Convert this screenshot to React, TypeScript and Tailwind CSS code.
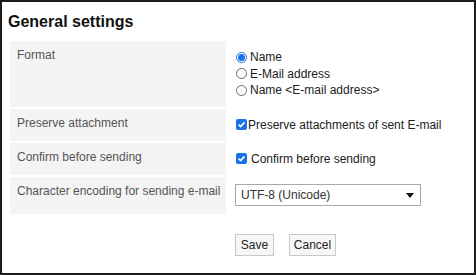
import React from "react";

const Radio = ({ checked }: { checked?: boolean }) =>
  checked ? (
    <span className="flex h-[11px] w-[11px] shrink-0 items-center justify-center rounded-full border border-[#1a73e8] bg-white">
      <span className="h-[7px] w-[7px] rounded-full bg-[#1a73e8]" />
    </span>
  ) : (
    <span className="h-[11px] w-[11px] shrink-0 rounded-full border border-[#6b6b6b] bg-white" />
  );

const Check = () => (
  <span className="flex h-[11px] w-[11px] shrink-0 items-center justify-center rounded-[2px] bg-[#1a73e8]">
    <svg width="9" height="9" viewBox="0 0 10 10">
      <path d="M1.8 5.2 L4 7.4 L8.3 2.6" fill="none" stroke="#fff" strokeWidth="1.8" />
    </svg>
  </span>
);

const Label = ({ children }: { children: React.ReactNode }) => (
  <div className="whitespace-nowrap bg-[#f4f4f4] pl-[7px] pt-[7px] text-[12px] leading-[15px] text-[#555]">{children}</div>
);

export default function App() {
  return (
    <div
      className="h-[275px] w-[476px] border-2 border-[#1c1c1c] bg-white text-[#222]"
      style={{ fontFamily: '"Liberation Sans", Arial, sans-serif' }}
    >
      <h1 className="pl-[6px] pt-[10px] text-[16px] font-bold leading-[20px] text-[#111]">General settings</h1>
      <div className="ml-[8px] mt-[9px] grid grid-cols-[216px_1fr] gap-x-[9px] gap-y-[2px]">
        <Label>Format</Label>
        <div className="flex flex-col justify-center py-[8px] text-[12px] leading-[16.5px]">
          <div className="flex items-center gap-[3px] pl-[1px]">
            <Radio checked />
            <span>Name</span>
          </div>
          <div className="flex items-center gap-[3px] pl-[1px]">
            <Radio />
            <span>E-Mail address</span>
          </div>
          <div className="flex items-center gap-[3px] pl-[1px]">
            <Radio />
            <span>Name &lt;E-mail address&gt;</span>
          </div>
        </div>

        <Label>Preserve attachment</Label>
        <div className="flex h-[32px] items-center gap-[1px] pl-[1px] text-[12px] leading-[16px]">
          <Check />
          <span>Preserve attachments of sent E-mail</span>
        </div>

        <Label>Confirm before sending</Label>
        <div className="flex h-[32px] items-center gap-[4px] pl-[1px] text-[12px] leading-[16px]">
          <Check />
          <span>Confirm before sending</span>
        </div>

        <Label>Character encoding for sending e-mail</Label>
        <div className="flex h-[37px] items-center">
          <div className="flex h-[22px] w-[186px] items-center justify-between border border-[#a9a9a9] bg-white pl-[5px] pr-[6px] text-[12px] text-[#333]">
            <span>UTF-8 (Unicode)</span>
            <svg width="8" height="5" viewBox="0 0 8 5">
              <path d="M0 0 H8 L4 5 Z" fill="#111" />
            </svg>
          </div>
        </div>
      </div>
      <div className="ml-[233px] mt-[20px] flex gap-[15px]">
        <button className="h-[22px] w-[39px] border border-[#c8c8c8] bg-[#f7f7f7] text-[12px] text-[#222]">Save</button>
        <button className="h-[22px] w-[47px] border border-[#c8c8c8] bg-[#f7f7f7] text-[12px] text-[#222]">Cancel</button>
      </div>
    </div>
  );
}
